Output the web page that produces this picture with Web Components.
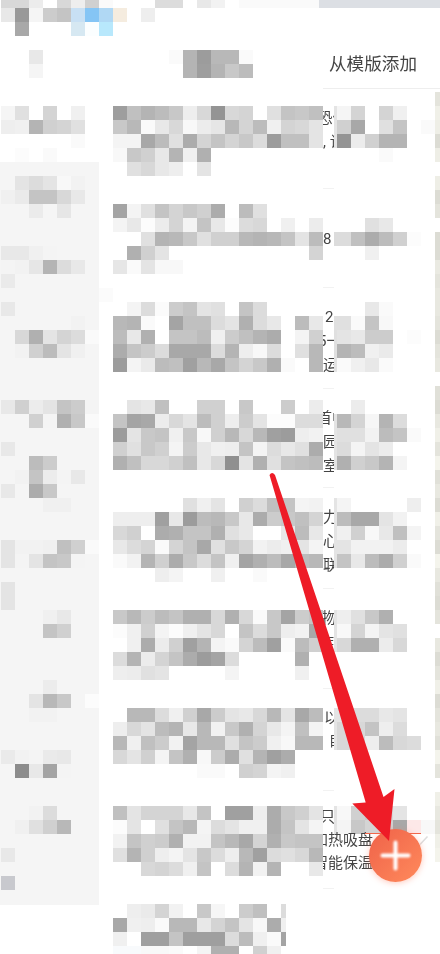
<!DOCTYPE html>
<html lang="zh">
<head>
<meta charset="utf-8">
<title>从模版添加</title>
<style>
  html, body { margin: 0; padding: 0; background: #fff; overflow: hidden; }
  body { font-family: Roboto, "Noto Sans CJK SC", sans-serif; color: #444; }
</style>
</head>
<body>
<app-page>
  <mosaic-grid>
    <side-panel slot="under"></side-panel>
    <status-strip></status-strip>
    <template-header>从模版添加</template-header>
    <card-list>
      <clip-card h="100"><clip-line x="-5.5">恐何</clip-line><clip-line>,&nbsp;诮</clip-line></clip-card>
      <clip-card h="99" pt="14"><clip-line>&nbsp;</clip-line><clip-line>8</clip-line></clip-card>
      <clip-card h="101"><clip-line x="2">2</clip-line><clip-line x="-5">5一</clip-line><clip-line>运</clip-line></clip-card>
      <clip-card h="99"><clip-line x="-6">首中</clip-line><clip-line>园</clip-line><clip-line>室</clip-line></clip-card>
      <clip-card h="101"><clip-line>力</clip-line><clip-line>心</clip-line><clip-line>联</clip-line></clip-card>
      <clip-card h="100"><clip-line x="-2">物</clip-line><clip-line x="-4">炸</clip-line></clip-card>
      <clip-card h="102"><clip-line x="1">以</clip-line><clip-line x="7">眠</clip-line></clip-card>
      <clip-card h="98" pt="14.5" lh="23"><clip-line x="-3">只</clip-line><clip-line x="-10" wide>加热吸盘</clip-line><clip-line x="-10" wide>智能保温</clip-line></clip-card>
    </card-list>
  </mosaic-grid>
  <chevron-mark></chevron-mark>
  <fab-button></fab-button>
  <red-arrow></red-arrow>
</app-page>

<script>
// every row: "col:value value ...", "." leaves a cell empty, value is a grey in hex
const ROWS = {
  0: '0:d8 d8 ec . d8 ee d0 fa 11:dc dc . e8 f2 . fa fa fa fa fa fa',
  1: '0:e8 99 f5 cc c4 #c8e0f4 #85c5f5 #b0d8f4 #f5ecdf . ee',
  2: '1:a8 5:#d6e8f2 #fbfeff #b8e8fc',
  4: '2:e8 12:fa b4 9c b8 b8 fa',
  5: '2:f5 13:b4 9e b4 c8 bc',
  8: '0:f5 e0 . d4 . f0 8:9e c0 b4 bc c8 ee d8 94 d8 d4 . e0 c4 c8 c0 e4 f5 d4 . d4 f0',
  9: '0:ee f0 b4 d0 d4 e0 8:c8 b8 fa e8 d8 f8 ec e6 b8 d4 bc f0 d4 d8 e4 e4 d0 a8 . e0 c4 . fa',
  10: '5:fa 8:f4 f4 a8 bc e0 ac d4 c4 d4 c8 dc 9c c0 c0 e4 e4 94 ec d0 b4 b4',
  11: '1:fc . fa 8:f8 c8 d0 e8 b4 f0 b0 27:fa',
  12: '9:e0 d8 e8 ee . e4',
  13: '1:e4 dc e4 f8 f2',
  14: '0:f0 ea c4 c4 d8 e8',
  15: '2:eb f5 e6 8:a4 f4 e0 c4 d4 c8 d0 ac . bc e0',
  16: '8:f4 e8 fc ec d4 f4 c4 e8 fc dc d8 . f0 . ec 26:e0 e8',
  17: '10:e0 b4 b8 c8 e0 d0 d0 b8 b4 b8 c4 e4 bc dc dc c0 ac bc d0 fc',
  18: '0:e8 e8 f0 f4 9:b0 d0 e4 22:d4 26:f0',
  19: '0:f4 f2 e6 b4 dc e8 8:e6 fa e4 f8 f8',
  20: '0:ea',
  21: '7:fb',
  22: '0:e8 8:. f4 dc fb cc c4 e4 e0 . c4 dc 26:e8 fa',
  23: '5:f2 8:b8 b4 fa . a4 c0 c0 dc e4 b0 dc e8 . bc e8 e0 e0 fa c4 f8',
  24: '1:d8 b0 e4 d4 dc fa . bc e8 b0 . c4 c4 bc f0 cc c0 b4 ac . f4 d0 e0 e4 e8 cc cc . fc',
  25: '1:f2 d0 bc e4 f0 8:ac c4 cc dc a8 a8 a8 dc b4 ee f8 dc . e0 b8 e0 b4 bc f0 ea',
  26: '8:9c f4 ea bc c0 a0 b8 a8 c4 d4 c8 b0 fa . b8 e4 fa f0 e8 fa',
  29: '0:e8 d0 ec e4 c4 cc f4 9:e4 e8 c0 14:d0 d0 17:c8 20:cc 22:ec 25:ec',
  30: '2:d0 f4 b0 c8 fa . c4 a4 a8 ec d8 e4 bc d0 ee cc e4 fc fc dc dc e4 b8 d4 f6 b4 dc',
  31: '8:9c e4 c8 c4 f0 c8 f8 d0 b8 d8 b8 a0 9c ee f2 e4 e0 e0 f2 bc c4 fa',
  32: '0:e8 8:d0 e0 c8 d0 f4 cc e8 f0 ee c4 f4 dc e8 e0 ac e4 dc f4 e4 ec',
  33: '2:bc cc 8:b0 c0 d8 d8 d0 c0 e8 d8 90 e4 b0 e0 c4 c0 bc e4 b0 d0 c8 b4 f4',
  34: '1:f2 c4 ec f4 e8',
  35: '0:e8 . ac c8',
  36: '3:f0 f0 13:e0 f0 e4 . d0 dc c0 c4 f4 f2 e4 f4 29:ee',
  37: '8:ee ee ee a0 e8 9c bc b8 c8 e8 ac cc c8 c0 d4 e4 bc a8 a8 e4 f2',
  38: '8:d8 d0 . ac b0 c4 c4 b0 e0 e8 . . e8 bc e8 e4 f0 d0 f8 e8 c0 f4',
  39: '0:e4 f2 f2 f0 c0 d0 fa . e8 dc d4 fa d4 c4 a8 e0 c8 d4 f2 ec f0 e4 f4 e4 e4 f2 f2 f2 ec',
  40: '0:e4 f4 e4 c4 c8 f4 . . fa f2 b4 d0 ac c8 dc c4 f0 a4 b0 bc a8 bc b8 e4 c4 e8 bc ac d0 fa',
  41: '11:ee f4 15:f0 18:fa',
  42: '0:e4',
  43: '0:e4',
  44: '3:f0 e8 8:c8 b8 cc bc c4 b0 b0 d8 b0 d8 fa c8 a4 cc c4 e4 ee e0 c8 b0',
  45: '3:c4 d0 8:fc f0 d0 f4 fc f0 e4 d8 . c4 dc c8 ee f2 a8 e4 f8 d4 f4 e4 e0',
  46: '9:f0 ac ec d0 a0 b4 f4 fa d4 bc a0 fa bc d0 e4 d8 b0 b0 ec d8',
  47: '8:dc b4 ec d4 c4 ac 9c a4 dc 21:b0',
  48: '8:ee ec e0 e4 16:f4 21:f0',
  49: '3:ec',
  50: '2:e4 b8 c8 . fc',
  51: '2:f2 f2 9:b8 b8 dc f0 d0 a8 cc e4 e8 d8 b8 e4 a8 bc e4 e4 dc dc e8 e4',
  52: '8:ee d8 e4 bc b4 e8 b8 f2 c8 b0 d4 e8 f4 c0 f4 e4 d8 d8 c4 ee dc',
  53: '8:b8 f0 c0 cc f2 a4 b8 b8 e0 c4 cc f0 f8 b8 b8 e4 d8 d8 ee bc d8 dc',
  54: '0:ea f2 f4 ea e8 8:d8 e4 d0 f4 c4 b0 f8 cc ac e0 b4 a0 ac',
  55: '1:8c e8 a4 f4 14:fa fa 17:d0 d4 f4 f0',
  58: '2:f2 dc 8:c0 e4 d4 d4 d4 e8 c4 . a0 a0 ee ac c8 d0 e4 e4 f8 d0 c8 d8 e4',
  59: '1:f0 e0 d0 b8 8:fc e4 . e0 c4 b8 f4 dc e4 f0 f0 ac c4 e4 f4 e4 f4 c8 d4 d0 a8 #fde8e8 f8',
  60: '8:f2 c4 d0 cc b0 f2 f2 c4 b8 a8 d4 b0 c8 c4 c4',
  61: '0:e8 8:e0 b4 d0 ee f4 e4 c8 dc ee b8 a0 dc e0 d8 b8',
  62: '10:d8 d4 dc f0 c4 . dc b4 f2 b4 22:e8',
  63: '0:#c8c9ce',
  65: '9:ee ea d4 f2 . c8 f6 . cc c0 . linear-gradient(90deg,#dcdcdc_5px,#fff_5px)',
  66: '8:a8 f0 ee fa b8 b8 e8 d4 c4 e4 f8 ac linear-gradient(90deg,#f0f0f0_5px,#fff_5px)',
  67: '8:f0 . 9f 9f c4 9f 9f 9f dc bc f0 fa linear-gradient(90deg,#a4a4a4_5px,#fff_5px)',
  68: '8:#f8fafc #f8fafc f8 f8 fa . f4 b0 b0 . d0 f0'
};
// the warm strip along the right edge, from row 7
const EDGE = 'e4 f0 ee dc ee .. ee dc e4 .. dc dc ea e4 e8 e8 e4 dc e4 e8 .. e0 dc e8 f0 e4 f4 e0 e8 dc f0 e4 dc f4 e8 e0 dc e4 .. e8 dc e4 f0 dc e4 e8 e0 f4 e4 .. f0 e8 e4 f0 f4'.split(' ');

const gridTemplate = document.createElement('template');
gridTemplate.innerHTML = `
  <style>
    :host { display: block; margin: -6px 0 0 1px; filter: blur(.35px); }
    .grid {
      display: grid;
      grid-template-columns: repeat(32, 14px);
      grid-template-rows: repeat(69, 14px);
    }
    #cells { display: contents; }
  </style>
  <div class="grid">
    <slot name="under"></slot>
    <div id="cells"></div>
    <slot></slot>
  </div>
`;

class MosaicGrid extends HTMLElement {
  connectedCallback() {
    const root = this.attachShadow({ mode: 'open' });
    root.appendChild(gridTemplate.content.cloneNode(true));
    const cells = root.getElementById('cells');
    const add = (row, col, bg) => {
      const cell = document.createElement('div');
      cell.style.gridArea = `${row + 1} / ${col + 1}`;
      cell.style.background = bg;
      cells.appendChild(cell);
    };
    const paint = (t) => t.length > 2 ? t.replace(/_/g, ' ') : `#${t}${t}${t}`;
    for (const [row, text] of Object.entries(ROWS)) {
      let col = 0;
      for (let token of text.split(' ')) {
        const m = token.match(/^(\d+):(.*)$/);
        if (m) { col = +m[1]; token = m[2]; }
        if (token !== '.') add(+row, col, paint(token));
        col++;
      }
    }
    EDGE.forEach((v, i) => {
      if (v !== '..') add(i + 7, 31, `#${v}${v}${(parseInt(v, 16) - 8).toString(16)}`);
    });
  }
}
customElements.define('mosaic-grid', MosaicGrid);

class SidePanel extends HTMLElement {
  connectedCallback() {
    this.attachShadow({ mode: 'open' }).innerHTML = `
      <style>
        :host { display: block; grid-area: 13 / 1 / 66 / 8; margin: 0 0 -1px -1px; background: #f5f5f5; }
      </style>`;
  }
}
customElements.define('side-panel', SidePanel);

class StatusStrip extends HTMLElement {
  connectedCallback() {
    this.attachShadow({ mode: 'open' }).innerHTML = `
      <style>
        :host { display: block; grid-area: 1 / 24 / 2 / -1; margin-left: -4px; background: #dcdfe4; }
      </style>`;
  }
}
customElements.define('status-strip', StatusStrip);

const headerTemplate = document.createElement('template');
headerTemplate.innerHTML = `
  <style>
    :host {
      display: flex;
      align-items: flex-end;
      grid-area: 2 / 24 / 8 / -1;
      align-self: start;
      box-sizing: border-box;
      height: 81px;
      padding: 0 0 13px 6px;
      background: #fff;
      border-bottom: 1px solid #eee;
      font: 17.6px/24px "Noto Sans CJK SC", sans-serif;
      color: #444;
    }
  </style>
  <slot></slot>
`;

class TemplateHeader extends HTMLElement {
  connectedCallback() {
    this.attachShadow({ mode: 'open' }).appendChild(headerTemplate.content.cloneNode(true));
  }
}
customElements.define('template-header', TemplateHeader);

class CardList extends HTMLElement {
  connectedCallback() {
    this.attachShadow({ mode: 'open' }).innerHTML = `
      <style>
        :host {
          display: flex;
          flex-direction: column;
          grid-area: 8 / 24 / 66 / 25;
          align-self: start;
          width: 11px;
          margin-top: -3px;
          background: #fff;
        }
      </style>
      <slot></slot>`;
  }
}
customElements.define('card-list', CardList);

class ClipCard extends HTMLElement {
  connectedCallback() {
    const root = this.attachShadow({ mode: 'open' });
    root.innerHTML = `
      <style>
        :host {
          display: flex;
          flex-direction: column;
          box-sizing: border-box;
          height: ${this.getAttribute('h')}px;
          padding-top: ${this.getAttribute('pt') || 17}px;
          border-bottom: 1px solid #f2f2f2;
          --lh: ${this.getAttribute('lh') || 24}px;
        }
      </style>
      <slot></slot>`;
  }
}
customElements.define('clip-card', ClipCard);

class ClipLine extends HTMLElement {
  connectedCallback() {
    const wide = this.hasAttribute('wide');
    this.attachShadow({ mode: 'open' }).innerHTML = `
      <style>
        :host {
          display: block;
          width: ${wide ? 60 : 11}px;
          height: var(--lh);
          overflow: hidden;
          font: 15px/var(--lh) Roboto, "Noto Sans CJK SC", sans-serif;
          color: #444;
          white-space: nowrap;
        }
        span { display: inline-block; margin-left: ${this.getAttribute('x') || 0}px; }
      </style>
      <span><slot></slot></span>`;
  }
}
customElements.define('clip-line', ClipLine);

class ChevronMark extends HTMLElement {
  connectedCallback() {
    this.attachShadow({ mode: 'open' }).innerHTML = `
      <style>
        :host { position: absolute; left: 416px; top: 833px; display: block; }
        svg { display: block; }
      </style>
      <svg width="14" height="14" viewBox="0 0 14 14">
        <path d="M11.5 3.5L4 11.5" stroke="#ddd" stroke-width="1.5" fill="none"/>
      </svg>`;
  }
}
customElements.define('chevron-mark', ChevronMark);

class FabButton extends HTMLElement {
  connectedCallback() {
    this.attachShadow({ mode: 'open' }).innerHTML = `
      <style>
        :host { position: absolute; left: 365px; top: 833px; width: 60px; height: 50px; display: block; }
        .edge { position: absolute; left: 0; top: 0; width: 56px; height: 1px; background: #f2664a; }
        .ball {
          position: absolute; left: 3.5px; top: -4.5px; width: 53px; height: 53px;
          border-radius: 50%;
          background: linear-gradient(135deg, #ef6249, #ff8a5c);
          box-shadow: 0 1px 6px rgba(255, 120, 90, .4);
          filter: blur(.4px);
        }
        svg { position: absolute; left: 3.5px; top: -4.5px; filter: blur(1px); }
      </style>
      <div class="edge"></div>
      <div class="ball"></div>
      <svg width="53" height="53" viewBox="0 0 53 53">
        <path d="M13.5 26.5h26M26.5 13.5v26" stroke="#fff" stroke-width="4" stroke-linecap="round" fill="none"/>
      </svg>`;
  }
}
customElements.define('fab-button', FabButton);

class RedArrow extends HTMLElement {
  connectedCallback() {
    this.attachShadow({ mode: 'open' }).innerHTML = `
      <style>
        :host { position: absolute; left: 0; top: 0; display: block; pointer-events: none; }
        svg { display: block; }
      </style>
      <svg width="440" height="954" viewBox="0 0 440 954">
        <path d="M269.5 475Q272 471 275 475L383.5 797 394.5 789 389 841 352.3 803.5 365.7 802.5Z" fill="#ee1c27"/>
      </svg>`;
  }
}
customElements.define('red-arrow', RedArrow);

class AppPage extends HTMLElement {
  connectedCallback() {
    this.attachShadow({ mode: 'open' }).innerHTML = `
      <style>
        :host { display: block; position: relative; width: 440px; height: 954px; overflow: hidden; background: #fff; }
      </style>
      <slot></slot>`;
  }
}
customElements.define('app-page', AppPage);
</script>
</body>
</html>
